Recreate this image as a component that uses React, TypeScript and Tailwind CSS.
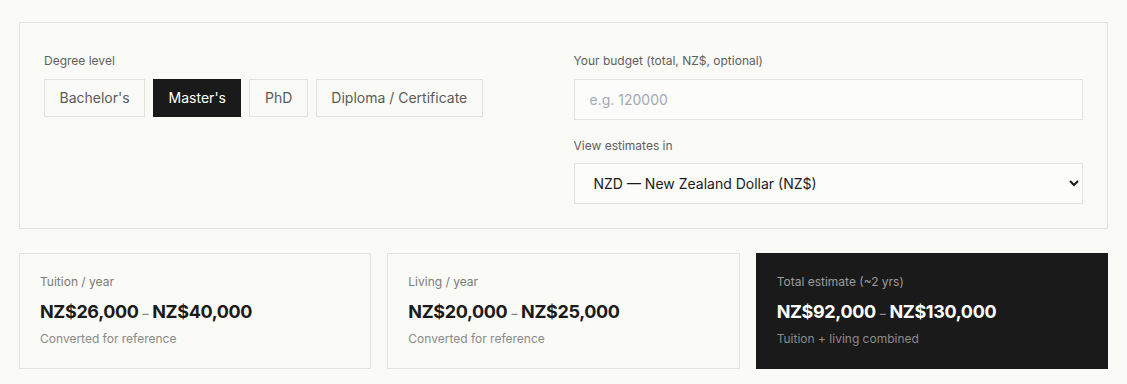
import { useState } from 'react'

const levels = ["Bachelor's", "Master's", 'PhD', 'Diploma / Certificate']

const cards = [
    { label: 'Tuition / year', low: 'NZ$26,000', high: 'NZ$40,000', note: 'Converted for reference', dark: false },
    { label: 'Living / year', low: 'NZ$20,000', high: 'NZ$25,000', note: 'Converted for reference', dark: false },
    { label: 'Total estimate (~2 yrs)', low: 'NZ$92,000', high: 'NZ$130,000', note: 'Tuition + living combined', dark: true },
]

export default function App() {
    const [level, setLevel] = useState("Master's")
    const [budget, setBudget] = useState('')
    const [currency, setCurrency] = useState('NZD')

    return (
        <div className="min-h-screen bg-[#fafaf7] px-[19px] pt-[22px] font-['Inter',sans-serif] text-[#1a1a1a]">
            <div className="grid grid-cols-2 gap-5 border border-[#e3e3de] px-6 pt-[28px] pb-6">
                <div>
                    <label className="block text-[12px] leading-5 text-[#5f5f5f] mb-2">Degree level</label>
                    <div className="flex gap-2">
                        {levels.map(l => (
                            <button
                                key={l}
                                onClick={() => setLevel(l)}
                                className={l === level
                                    ? 'border border-[#1a1a1a] bg-[#1a1a1a] text-white px-[14.5px] py-2 text-[14px] leading-5'
                                    : 'border border-[#e3e3de] bg-transparent text-[#5a5a5a] px-[14.5px] py-2 text-[14px] leading-5'}
                            >
                                {l}
                            </button>
                        ))}
                    </div>
                </div>
                <div className="flex flex-col">
                    <label className="block text-[12px] leading-5 text-[#5f5f5f] mb-2">Your budget (total, NZ$, optional)</label>
                    <input
                        value={budget}
                        onChange={e => setBudget(e.target.value)}
                        placeholder="e.g. 120000"
                        className="w-full h-[41px] border border-[#e3e3de] bg-[#fcfcfa] px-[15px] text-[14px] placeholder:text-[#a3a8b4] outline-none"
                    />
                    <label className="block text-[12px] leading-5 text-[#5f5f5f] mt-4 mb-[7px]">View estimates in</label>
                    <select
                        value={currency}
                        onChange={e => setCurrency(e.target.value)}
                        className="w-full h-[41px] border border-[#e3e3de] bg-[#fcfcfa] px-[15px] text-[14px] text-[#1a1a1a] outline-none"
                    >
                        <option value="NZD">NZD — New Zealand Dollar (NZ$)</option>
                        <option value="USD">USD — US Dollar (US$)</option>
                        <option value="AUD">AUD — Australian Dollar (A$)</option>
                    </select>
                </div>
            </div>

            <div className="grid grid-cols-3 gap-4 mt-6">
                {cards.map(c => (
                    <div
                        key={c.label}
                        className={c.dark
                            ? 'border border-[#1a1a1a] bg-[#1a1a1a] px-5 pt-5 pb-[21px]'
                            : 'border border-[#e3e3de] px-5 pt-5 pb-[21px]'}
                    >
                        <div className={c.dark ? 'text-[12px] leading-4 text-[#9a9a9a]' : 'text-[12px] leading-4 text-[#7a7a7a]'}>{c.label}</div>
                        <div className={c.dark ? 'mt-[10px] text-[18px] leading-6 font-bold tracking-[-0.02em] text-white' : 'mt-[10px] text-[18px] leading-6 font-bold tracking-[-0.02em] text-[#1a1a1a]'}>
                            {c.low}
                            <span className="mx-1 text-[12px] font-semibold text-[#8a8a8a]">–</span>
                            {c.high}
                        </div>
                        <div className="mt-[5px] text-[12px] leading-4 text-[#8a8a8a]">{c.note}</div>
                    </div>
                ))}
            </div>
        </div>
    )
}
